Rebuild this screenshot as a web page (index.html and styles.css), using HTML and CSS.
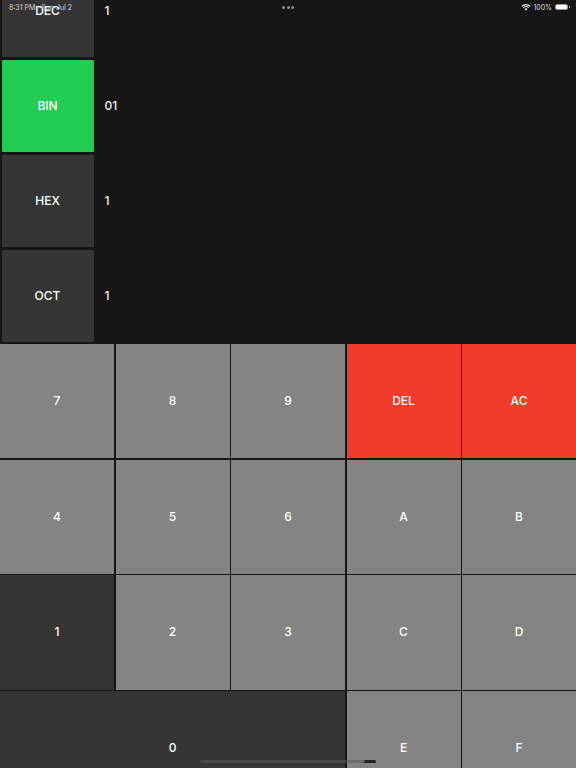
FILE: index.html
```html
<!DOCTYPE html>
<html lang="en">
<head>
  <meta charset="UTF-8">
  <title>Base Calculator</title>
  <meta name="viewport" content="width=device-width, initial-scale=1.0">
  <link rel="stylesheet" href="styles.css">
</head>
<body>
  <div class="app">
    <div class="status-bar">
      <span>8:31 PM&nbsp;&nbsp;&nbsp;Sun Jul 2</span>
      <div class="status-dots"><i></i><i></i><i></i></div>
      <div class="status-right">
        <svg class="wifi" width="10" height="8" viewBox="0 0 10 8">
          <path d="M5 7.6 3.4 5.9a2.3 2.3 0 0 1 3.2 0Z" fill="#e8e8e8"/>
          <path d="M2.6 5.1a3.4 3.4 0 0 1 4.8 0l.7-.7a4.4 4.4 0 0 0-6.2 0Z" fill="#e8e8e8"/>
          <path d="M1.2 3.7a5.4 5.4 0 0 1 7.6 0l.8-.8a6.5 6.5 0 0 0-9.2 0Z" fill="#e8e8e8"/>
        </svg>
        <span>100%</span>
        <div class="battery"><div class="battery-fill"></div></div>
      </div>
    </div>

    <div class="display">
      <div class="base-row">
        <div class="base">DEC</div>
        <div class="value">1</div>
      </div>
      <div class="base-row">
        <div class="base active">BIN</div>
        <div class="value">01</div>
      </div>
      <div class="base-row">
        <div class="base">HEX</div>
        <div class="value">1</div>
      </div>
      <div class="base-row">
        <div class="base">OCT</div>
        <div class="value">1</div>
      </div>
    </div>

    <div class="keypad">
      <button>7</button>
      <button>8</button>
      <button>9</button>
      <button class="danger">DEL</button>
      <button class="danger">AC</button>
      <button>4</button>
      <button>5</button>
      <button>6</button>
      <button>A</button>
      <button>B</button>
      <button class="dark">1</button>
      <button>2</button>
      <button>3</button>
      <button>C</button>
      <button>D</button>
      <button class="dark wide">0</button>
      <button>E</button>
      <button>F</button>
    </div>

    <div class="home-bar"><div class="home-bar-thumb"></div></div>
  </div>
</body>
</html>
```

FILE: styles.css
```css
* { box-sizing: border-box; margin: 0; padding: 0; }
body {
  font-family: 'Inter', 'Roboto', Arial, sans-serif;
  background: #161616;
  color: #fff;
  height: 768px;
  overflow: hidden;
}
.app {
  position: relative;
  width: 576px;
  height: 768px;
  overflow: hidden;
}
.status-bar {
  position: absolute;
  top: 3px; left: 9px; right: 8px;
  height: 8px;
  z-index: 2;
  display: flex;
  justify-content: space-between;
  align-items: center;
  font-size: 7px;
  color: #d8d8d8;
}
.status-dots {
  position: absolute;
  left: 273px;
  top: 3px;
  display: flex;
  gap: 1.5px;
}
.status-dots i {
  width: 3px;
  height: 3px;
  border-radius: 50%;
  background: #8f8f8f;
}
.status-right {
  display: flex;
  align-items: center;
  gap: 2px;
}
.battery {
  position: relative;
  width: 13px;
  height: 6px;
  border: 1px solid #999;
  border-radius: 2px;
  margin-left: 1px;
}
.battery::after {
  content: "";
  position: absolute;
  top: 1px; right: -2.5px;
  width: 1px;
  height: 2px;
  background: #999;
}
.battery-fill {
  height: 100%;
  background: #fff;
  border-radius: 1px;
}
.display {
  height: 344px;
  padding: 0 0 2px 1.5px;
  display: flex;
  flex-direction: column;
  justify-content: flex-end;
  gap: 3px;
  overflow: hidden;
}
.base-row {
  display: flex;
  align-items: center;
  flex-shrink: 0;
  gap: 11px;
  height: 92px;
}
.base {
  width: 92px;
  height: 100%;
  padding-bottom: 1px;
  background: #353535;
  border-radius: 1px;
  display: flex;
  align-items: center;
  justify-content: center;
  font-size: 12px;
  font-weight: 500;
}
.base.active { background: #22cc55; }
.value {
  padding-bottom: 1px;
  font-size: 12px;
  font-weight: 500;
  color: #f2f2f2;
}
.keypad {
  display: grid;
  grid-template-columns: repeat(5, 1fr);
  grid-auto-rows: 114.2px;
  gap: 1.5px;
}
.keypad button {
  background: #848484;
  border: none;
  padding-bottom: 1px;
  color: #fff;
  font-family: inherit;
  font-size: 12px;
  font-weight: 500;
}
.keypad button.danger { background: #f13b2b; }
.keypad button.dark { background: #353535; }
.keypad button.wide { grid-column: span 3; }
/* Home indicator */
.home-bar {
  position: absolute;
  left: 200px;
  bottom: 5px;
  width: 176px;
  height: 3px;
  border-radius: 2px;
  background: rgba(90, 90, 90, 0.55);
  display: flex;
  justify-content: flex-end;
}
.home-bar-thumb {
  width: 12px;
  height: 3px;
  border-radius: 2px;
  background: #222;
}
```
